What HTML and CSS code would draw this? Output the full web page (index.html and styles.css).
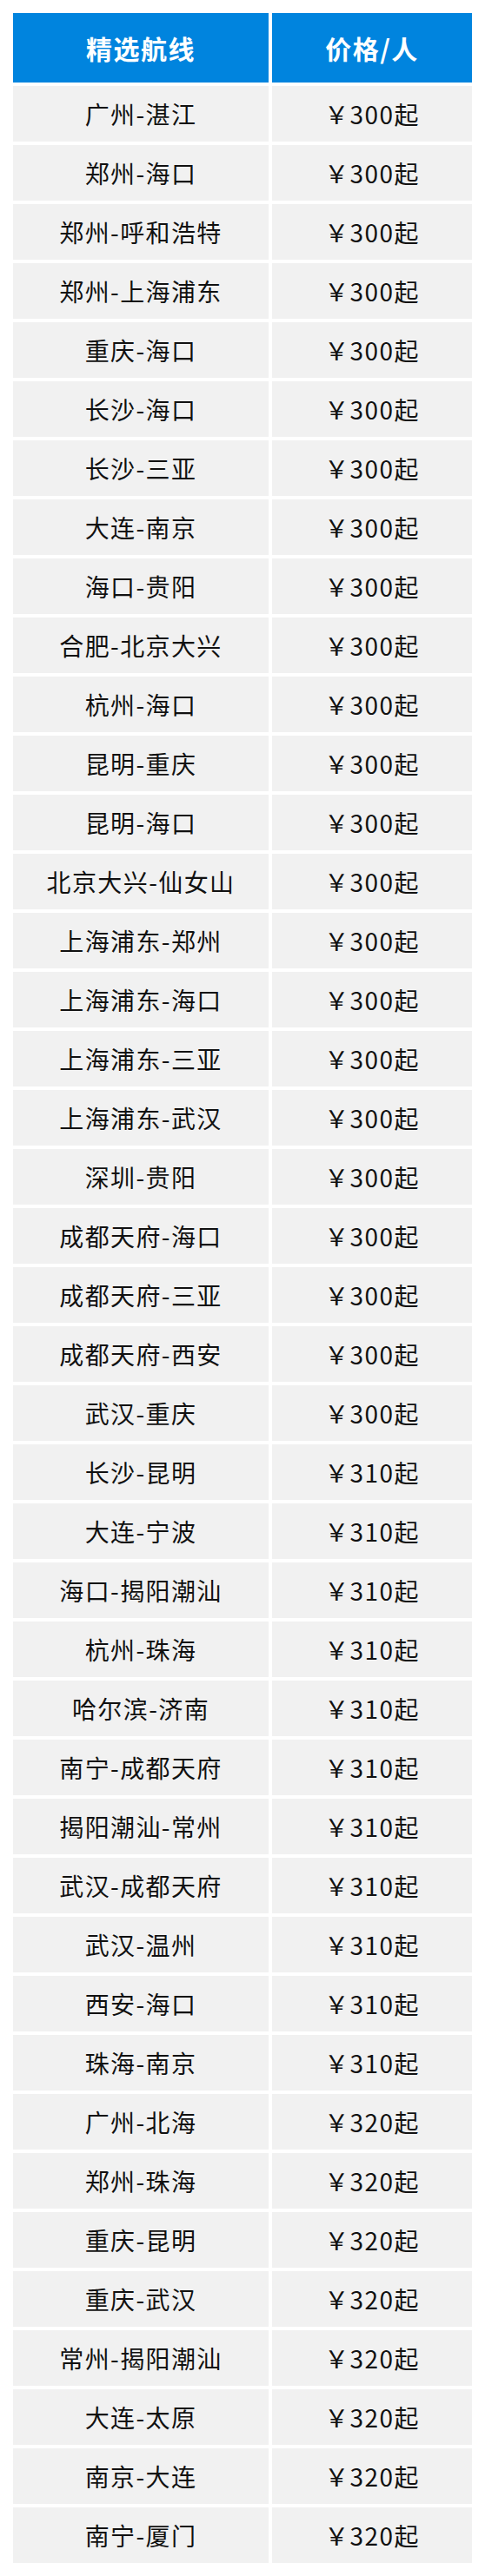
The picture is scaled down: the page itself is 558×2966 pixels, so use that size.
FILE: index.html
```html
<!DOCTYPE html>
<html lang="zh-CN">
<head>
<meta charset="utf-8">
<title>精选航线</title>
<link rel="stylesheet" href="styles.css">
</head>
<body>
<div class="table">
  <div class="cell head">精选航线</div><div class="cell head">价格/人</div>
  <div class="cell">广州-湛江</div><div class="cell">￥300起</div>
  <div class="cell">郑州-海口</div><div class="cell">￥300起</div>
  <div class="cell">郑州-呼和浩特</div><div class="cell">￥300起</div>
  <div class="cell">郑州-上海浦东</div><div class="cell">￥300起</div>
  <div class="cell">重庆-海口</div><div class="cell">￥300起</div>
  <div class="cell">长沙-海口</div><div class="cell">￥300起</div>
  <div class="cell">长沙-三亚</div><div class="cell">￥300起</div>
  <div class="cell">大连-南京</div><div class="cell">￥300起</div>
  <div class="cell">海口-贵阳</div><div class="cell">￥300起</div>
  <div class="cell">合肥-北京大兴</div><div class="cell">￥300起</div>
  <div class="cell">杭州-海口</div><div class="cell">￥300起</div>
  <div class="cell">昆明-重庆</div><div class="cell">￥300起</div>
  <div class="cell">昆明-海口</div><div class="cell">￥300起</div>
  <div class="cell">北京大兴-仙女山</div><div class="cell">￥300起</div>
  <div class="cell">上海浦东-郑州</div><div class="cell">￥300起</div>
  <div class="cell">上海浦东-海口</div><div class="cell">￥300起</div>
  <div class="cell">上海浦东-三亚</div><div class="cell">￥300起</div>
  <div class="cell">上海浦东-武汉</div><div class="cell">￥300起</div>
  <div class="cell">深圳-贵阳</div><div class="cell">￥300起</div>
  <div class="cell">成都天府-海口</div><div class="cell">￥300起</div>
  <div class="cell">成都天府-三亚</div><div class="cell">￥300起</div>
  <div class="cell">成都天府-西安</div><div class="cell">￥300起</div>
  <div class="cell">武汉-重庆</div><div class="cell">￥300起</div>
  <div class="cell">长沙-昆明</div><div class="cell">￥310起</div>
  <div class="cell">大连-宁波</div><div class="cell">￥310起</div>
  <div class="cell">海口-揭阳潮汕</div><div class="cell">￥310起</div>
  <div class="cell">杭州-珠海</div><div class="cell">￥310起</div>
  <div class="cell">哈尔滨-济南</div><div class="cell">￥310起</div>
  <div class="cell">南宁-成都天府</div><div class="cell">￥310起</div>
  <div class="cell">揭阳潮汕-常州</div><div class="cell">￥310起</div>
  <div class="cell">武汉-成都天府</div><div class="cell">￥310起</div>
  <div class="cell">武汉-温州</div><div class="cell">￥310起</div>
  <div class="cell">西安-海口</div><div class="cell">￥310起</div>
  <div class="cell">珠海-南京</div><div class="cell">￥310起</div>
  <div class="cell">广州-北海</div><div class="cell">￥320起</div>
  <div class="cell">郑州-珠海</div><div class="cell">￥320起</div>
  <div class="cell">重庆-昆明</div><div class="cell">￥320起</div>
  <div class="cell">重庆-武汉</div><div class="cell">￥320起</div>
  <div class="cell">常州-揭阳潮汕</div><div class="cell">￥320起</div>
  <div class="cell">大连-太原</div><div class="cell">￥320起</div>
  <div class="cell">南京-大连</div><div class="cell">￥320起</div>
  <div class="cell">南宁-厦门</div><div class="cell">￥320起</div>
</div>
</body>
</html>
```
FILE: styles.css
```css
html, body {
  margin: 0;
  padding: 0;
  background: #ffffff;
}
body {
  font-family: "Noto Sans CJK SC", "Noto Sans", sans-serif;
}
.table {
  display: grid;
  grid-template-columns: 294px 230px;
  grid-template-rows: 80px;
  grid-auto-rows: 64px;
  gap: 4px;
  padding: 15px;
}
.cell {
  display: flex;
  align-items: center;
  justify-content: center;
  background: #f1f1f1;
  color: #111111;
  font-size: 28px;
  letter-spacing: 0.05em;
  line-height: 1;
}
.cell.head {
  background: #0084de;
  color: #ffffff;
  font-size: 30px;
  font-weight: 700;
}
```
